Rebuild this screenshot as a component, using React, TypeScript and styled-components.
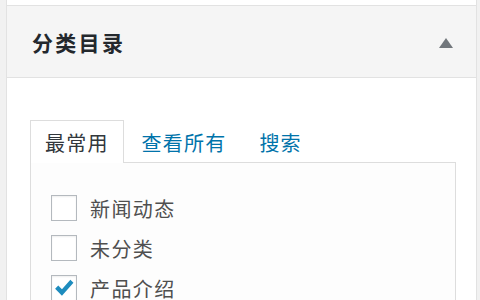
import React from 'react';
import styled, { createGlobalStyle } from 'styled-components';

const GlobalStyle = createGlobalStyle`
    html, body {
        margin: 0;
        padding: 0;
        background: #f1f1f1;
        font-family: "Noto Sans CJK SC", "Noto Sans", sans-serif;
    }
`;

const Page = styled.div`
    height: 300px;
    overflow: hidden;
    padding: 0 3px 0 6px;
`;

const Box = styled.div`
    background: #ffffff;
    border-left: 1px solid #e2e2e2;
    border-right: 1px solid #e2e2e2;
    height: 300px;
`;

const PrevStrip = styled.div`
    height: 5px;
    background: #ffffff;
`;

const Header = styled.div`
    display: flex;
    align-items: center;
    justify-content: space-between;
    height: 71px;
    padding: 0 23px 0 25px;
    background: #f5f5f5;
    border-top: 1px solid #e2e2e2;
    border-bottom: 1px solid #e2e2e2;
`;

const Title = styled.h2`
    margin: 0;
    font-size: 21px;
    font-weight: 600;
    color: #23282d;
    letter-spacing: 2.3px;
`;

const Toggle = styled.span`
    width: 0;
    height: 0;
    border-left: 7px solid transparent;
    border-right: 7px solid transparent;
    border-bottom: 10px solid #72777c;
    margin-top: 2px;
`;

const Body = styled.div`
    padding: 42px 20px 0 23px;
`;

const Tabs = styled.div`
    display: flex;
    align-items: flex-end;
    gap: 3px;
`;

const Tab = styled.div<{ $active?: boolean }>`
    height: 42px;
    display: flex;
    align-items: center;
    padding: 0 14px;
    font-size: 20px;
    letter-spacing: 1.2px;
    color: ${p => (p.$active ? '#32373c' : '#0073aa')};
    background: ${p => (p.$active ? '#ffffff' : 'transparent')};
    border: 1px solid ${p => (p.$active ? '#dddddd' : 'transparent')};
    border-bottom: none;
    margin-bottom: -1px;
    position: relative;
    z-index: 1;
`;

const Panel = styled.div`
    width: 426px;
    height: 200px;
    border: 1px solid #dddddd;
    background: #fdfdfd;
    padding: 32px 0 0 20px;
    box-sizing: border-box;
`;

const Row = styled.label`
    display: flex;
    align-items: center;
    gap: 13px;
    height: 26px;
    margin-bottom: 14px;
    font-size: 20px;
    letter-spacing: 1.4px;
    color: #4f4f4f;
`;

const Check = styled.span`
    width: 26px;
    height: 26px;
    box-sizing: border-box;
    border: 1px solid #b4b9be;
    background: #ffffff;
    box-shadow: inset 0 1px 2px rgba(0, 0, 0, 0.07);
    display: flex;
    align-items: center;
    justify-content: center;
`;

const items = [
    { name: '新闻动态', checked: false },
    { name: '未分类', checked: false },
    { name: '产品介绍', checked: true },
];

const CheckMark = () => (
    <svg width="24" height="24" viewBox="0 0 20 20">
        <path d="M2.6 10.6 L5.2 7.9 L8.3 11.1 L15.3 3.2 L17.9 5.6 L8.3 16.4 Z" fill="#1e8cbe" />
    </svg>
);

export default function App() {
    return (
        <>
            <GlobalStyle />
            <Page>
                <Box>
                    <PrevStrip />
                    <Header>
                        <Title>分类目录</Title>
                        <Toggle />
                    </Header>
                    <Body>
                        <Tabs>
                            <Tab $active>最常用</Tab>
                            <Tab>查看所有</Tab>
                            <Tab>搜索</Tab>
                        </Tabs>
                        <Panel>
                            {items.map(item => (
                                <Row key={item.name}>
                                    <Check>{item.checked && <CheckMark />}</Check>
                                    {item.name}
                                </Row>
                            ))}
                        </Panel>
                    </Body>
                </Box>
            </Page>
        </>
    );
}
